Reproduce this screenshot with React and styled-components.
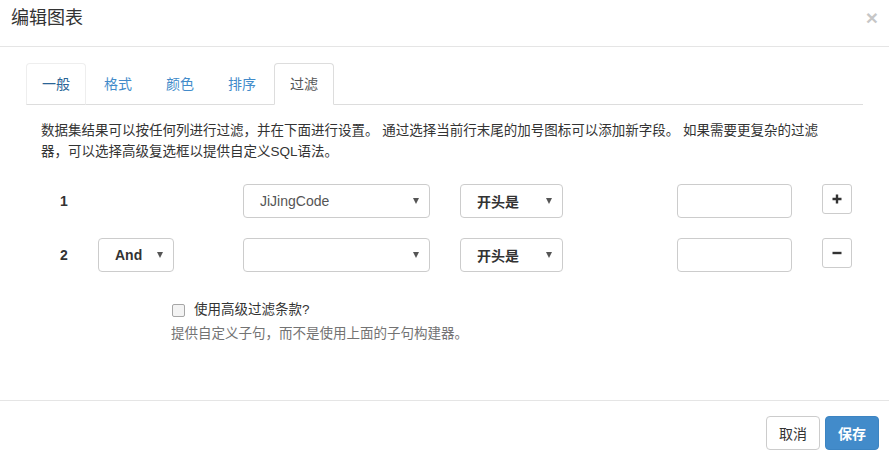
import styled, { createGlobalStyle, css } from "styled-components";

const GlobalStyle = createGlobalStyle`
    html, body {
        margin: 0;
        padding: 0;
        background: #fff;
    }
    body {
        font-family: "Liberation Sans", "Noto Sans CJK SC", sans-serif;
        font-size: 14px;
        color: #333;
    }
`;

const Modal = styled.div`
    width: 889px;
    height: 463px;
    display: flex;
    flex-direction: column;
    background: #fff;
`;

const Header = styled.div`
    height: 47px;
    box-sizing: border-box;
    padding: 8px 11px 0;
    border-bottom: 1px solid #e5e5e5;
    display: flex;
    justify-content: space-between;
`;

const Title = styled.h4`
    margin: 0;
    font-size: 18px;
    font-weight: 400;
    line-height: 21px;
    color: #333;
`;

const Close = styled.span`
    font-size: 21px;
    font-weight: bold;
    line-height: 16px;
    color: #000;
    opacity: 0.22;
    margin-top: 2px;
`;

const Body = styled.div`
    flex: 1;
    padding: 16px 26px 0;
`;

const Tabs = styled.ul`
    list-style: none;
    margin: 0;
    padding: 0;
    display: flex;
    border-bottom: 1px solid #ddd;
`;

const Tab = styled.li`
    margin-right: 2px;
    margin-bottom: -1px;
    padding: 10px 15px;
    line-height: 20px;
    border: 1px solid transparent;
    border-radius: 4px 4px 0 0;
    color: #428bca;
    ${(props) => props.hover && css`
        border-color: #eee #eee #ddd;
        color: #2a6496;
    `}
    ${(props) => props.active && css`
        border-color: #ddd #ddd transparent;
        background: #fff;
        color: #555;
    `}
`;

const Intro = styled.p`
    margin: 15px 0 0;
    padding: 0 37px 0 15px;
    font-size: 13.5px;
    line-height: 21px;
    color: #333;
`;

const Rows = styled.div`
    margin-top: 22px;
    display: flex;
    flex-direction: column;
    gap: 20px;
`;

const Row = styled.div`
    display: flex;
    align-items: center;
    height: 34px;
`;

const Num = styled.div`
    width: 72px;
    padding-left: 4px;
    box-sizing: border-box;
    text-align: center;
    font-weight: bold;
    font-size: 14px;
`;

const Cell = styled.div`
    width: ${(props) => props.w}px;
    flex-shrink: 0;
    display: flex;
    align-items: center;
`;

const Select = styled.div`
    width: ${(props) => props.w}px;
    height: 34px;
    box-sizing: border-box;
    border: 1px solid #ccc;
    border-radius: 4px;
    padding: 0 10px 0 16px;
    display: flex;
    align-items: center;
    font-size: 14px;
    color: #555;
    ${(props) => props.bold && css`
        font-weight: bold;
        color: #333;
    `}
`;

const Caret = styled.span`
    margin-left: auto;
    width: 0;
    height: 0;
    border-left: 3px solid transparent;
    border-right: 3px solid transparent;
    border-top: 6px solid #555;
`;

const Input = styled.div`
    width: 115px;
    height: 34px;
    box-sizing: border-box;
    border: 1px solid #ccc;
    border-radius: 4px;
`;

const IconButton = styled.div`
    width: 30px;
    height: 30px;
    box-sizing: border-box;
    border: 1px solid #ccc;
    border-radius: 3px;
    display: flex;
    align-items: center;
    justify-content: center;
    margin-top: -4px;
`;

const Advanced = styled.div`
    margin: 28px 0 0 145px;
`;

const CheckLine = styled.label`
    display: flex;
    align-items: center;
    gap: 9px;
    font-size: 13.5px;
    line-height: 20px;
    color: #333;
`;

const Box = styled.span`
    width: 11px;
    height: 11px;
    border: 1px solid #a6a6a6;
    border-radius: 2px;
    background: #f3f3f3;
    margin-left: 1px;
`;

const Help = styled.p`
    margin: 4px 0 0;
    font-size: 13.5px;
    line-height: 20px;
    color: #737373;
`;

const Footer = styled.div`
    height: 63px;
    box-sizing: border-box;
    border-top: 1px solid #e5e5e5;
    padding: 15px 10px 0;
    display: flex;
    justify-content: flex-end;
    gap: 5px;
`;

const Button = styled.button`
    width: 54px;
    height: 34px;
    border-radius: 4px;
    border: 1px solid #ccc;
    background: #fff;
    color: #333;
    font-family: inherit;
    font-size: 14px;
    ${(props) => props.primary && css`
        background: #428bca;
        border-color: #3c84c2;
        color: #fff;
        font-weight: bold;
    `}
`;

const Plus = () => (
    <svg width="10" height="10" viewBox="0 0 10 10">
        <path d="M5 0.5v9M0.5 5h9" stroke="#333" strokeWidth="2.4" />
    </svg>
);

const Minus = () => (
    <svg width="10" height="10" viewBox="0 0 10 10">
        <path d="M0.5 5h9" stroke="#333" strokeWidth="2.4" />
    </svg>
);

const tabs = ["一般", "格式", "颜色", "排序", "过滤"];

const filters = [
    { id: 1, field: "JiJingCode" },
    { id: 2, joiner: "And", field: "" },
];

const App = () => {
    return (
        <>
            <GlobalStyle />
            <Modal>
                <Header>
                    <Title>编辑图表</Title>
                    <Close>×</Close>
                </Header>
                <Body>
                    <Tabs>
                        {tabs.map((t, i) => (
                            <Tab key={t} hover={i === 0} active={i === 4}>{t}</Tab>
                        ))}
                    </Tabs>
                    <Intro>
                        数据集结果可以按任何列进行过滤，并在下面进行设置。 通过选择当前行末尾的加号图标可以添加新字段。 如果需要更复杂的过滤器，可以选择高级复选框以提供自定义SQL语法。
                    </Intro>
                    <Rows>
                        {filters.map((f) => (
                            <Row key={f.id}>
                                <Num>{f.id}</Num>
                                <Cell w={145}>
                                    {f.joiner && (
                                        <Select w={76} bold>{f.joiner}<Caret /></Select>
                                    )}
                                </Cell>
                                <Cell w={217}>
                                    <Select w={187}>{f.field}<Caret /></Select>
                                </Cell>
                                <Cell w={217}>
                                    <Select w={103} bold>开头是<Caret /></Select>
                                </Cell>
                                <Cell w={145}>
                                    <Input />
                                </Cell>
                                <IconButton>{f.id === 1 ? <Plus /> : <Minus />}</IconButton>
                            </Row>
                        ))}
                    </Rows>
                    <Advanced>
                        <CheckLine>
                            <Box />
                            使用高级过滤条款?
                        </CheckLine>
                        <Help>提供自定义子句，而不是使用上面的子句构建器。</Help>
                    </Advanced>
                </Body>
                <Footer>
                    <Button>取消</Button>
                    <Button primary>保存</Button>
                </Footer>
            </Modal>
        </>
    );
};

export default App;
